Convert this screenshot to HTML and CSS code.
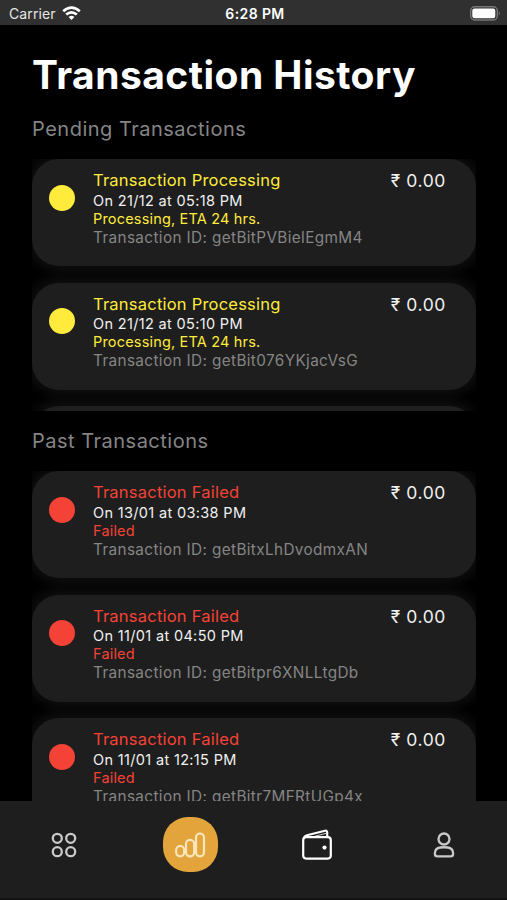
FILE: index.html
```html
<!DOCTYPE html>
<html lang="en">
<head>
<meta charset="utf-8">
<meta name="viewport" content="width=device-width">
<title>Transaction History</title>
<link rel="stylesheet" href="styles.css">
</head>
<body>
<header class="status">
  <div class="carrier"><span>Carrier</span>
    <svg width="19" height="15" viewBox="0 0 19 15" fill="none" stroke="#fff" stroke-width="2.700"><path d="M1.200 5.300Q9.500-2.200 17.800 5.300M4.200 8.600q5.300-4.600 10.600 0"/><path d="M6.600 11q2.900-2.300 5.800 0l-2.900 3z" fill="#fff" stroke="none"/></svg>
  </div>
  <div class="time">6:28 PM</div>
  <svg class="battery" width="31" height="15" viewBox="0 0 31 15"><rect x=".7" y=".7" width="26.600" height="13.300" rx="4" fill="none" stroke="#777" stroke-width="1.400"/><rect x="2.300" y="2.500" width="23" height="9.700" rx="2.200" fill="#fff"/><path d="M28.800 5.200q2 2.100 0 4.200z" fill="#777"/></svg>
</header>
<main>
  <h1>Transaction History</h1>
  <h2>Pending Transactions</h2>
  <section class="list pending">
    <article class="card"><i class="dot"></i><div class="info"><h3>Transaction Processing</h3><p class="date">On 21/12 at 05:18 PM</p><p class="state">Processing, ETA 24 hrs.</p><p class="id">Transaction ID: getBitPVBielEgmM4</p></div><div class="amount">₹ 0.00</div></article>
    <article class="card"><i class="dot"></i><div class="info"><h3>Transaction Processing</h3><p class="date">On 21/12 at 05:10 PM</p><p class="state">Processing, ETA 24 hrs.</p><p class="id">Transaction ID: getBit076YKjacVsG</p></div><div class="amount">₹ 0.00</div></article>
    <article class="card"></article>
  </section>
  <h2>Past Transactions</h2>
  <section class="list past">
    <article class="card"><i class="dot"></i><div class="info"><h3>Transaction Failed</h3><p class="date">On 13/01 at 03:38 PM</p><p class="state">Failed</p><p class="id">Transaction ID: getBitxLhDvodmxAN</p></div><div class="amount">₹ 0.00</div></article>
    <article class="card"><i class="dot"></i><div class="info"><h3>Transaction Failed</h3><p class="date">On 11/01 at 04:50 PM</p><p class="state">Failed</p><p class="id">Transaction ID: getBitpr6XNLLtgDb</p></div><div class="amount">₹ 0.00</div></article>
    <article class="card"><i class="dot"></i><div class="info"><h3>Transaction Failed</h3><p class="date">On 11/01 at 12:15 PM</p><p class="state">Failed</p><p class="id">Transaction ID: getBitr7MFRtUGp4x</p></div><div class="amount">₹ 0.00</div></article>
  </section>
</main>
<nav>
  <a class="tab"><svg class="grid-icon" width="26" height="26" viewBox="0 0 26 26" fill="none" stroke="#c9c9c9" stroke-width="2.300"><circle cx="6.300" cy="6.300" r="4.500"/><circle cx="19.700" cy="6.300" r="4.500"/><circle cx="6.300" cy="19.700" r="4.500"/><circle cx="19.700" cy="19.700" r="4.500"/></svg></a>
  <a class="tab"><span class="active"><svg width="32" height="28" viewBox="0 0 32 28" fill="none" stroke="#f8e6bd" stroke-width="2.200"><rect x="2.200" y="15" width="8" height="10.300" rx="4"/><rect x="12" y="8.800" width="8.200" height="16.500" rx="4.100"/><rect x="22" y="2.500" width="8" height="22.800" rx="4"/></svg></span></a>
  <a class="tab"><svg width="32" height="32" viewBox="0 0 32 32" fill="none" stroke="#fff" stroke-width="2.200" stroke-linejoin="round"><rect x="2.200" y="8.200" width="27.600" height="21.400" rx="3"/><path d="M3 8.600Q3.500 7.100 6 6.300L24 1.800q2.200-.5 2.200 1.800v4"/><path d="M14 7.200L25 4.400" stroke-width=".8"/><circle cx="23.500" cy="18.600" r="2.100" fill="#fff" stroke="none"/></svg></a>
  <a class="tab"><svg width="24" height="28" viewBox="0 0 24 28" fill="none" stroke="#c9c9c9" stroke-width="2.300"><circle cx="12" cy="8" r="5.500"/><path d="M5.600 25.400h12.800q2.700 0 2.700-2.700v-.5q0-5-5.300-5.700-3.800-.5-7.600 0-5.300.7-5.300 5.700v.5q0 2.700 2.700 2.700z"/></svg></a>
</nav>
</body>
</html>
```
FILE: styles.css
```css
* { box-sizing: border-box; margin: 0; padding: 0; }
body { width: 507px; height: 900px; overflow: hidden; display: flex; flex-direction: column; background: #000; color: #fff; font-family: Inter, "Noto Sans", sans-serif; white-space: nowrap; }
.status { height: 25px; flex: none; background: #303030; display: grid; grid-template-columns: 1fr auto 1fr; align-items: center; padding: 2px 6px 0 9px; font-size: 14px; color: #e6e6e6; }
.carrier { display: flex; align-items: center; gap: 6px; letter-spacing: .1px; }
.time { font-weight: 600; font-size: 14px; letter-spacing: .4px; color: #fff; }
.battery { justify-self: end; }
main { flex: 1; min-height: 0; padding: 0 31px 0 32px; display: flex; flex-direction: column; }
h1 { height: 90px; line-height: 100px; font-size: 39px; font-weight: 700; letter-spacing: .46px; }
h2 { height: 44px; line-height: 29px; font-size: 20px; font-weight: 400; letter-spacing: .5px; color: #858585; }
.list { overflow: hidden; display: flex; flex-direction: column; gap: 16.500px; }
.pending { height: 252px; flex: none; margin-bottom: 16px; color: #ffeb3b; }
.past { flex: 1; min-height: 0; color: #f44336; }
.card { flex: none; height: 107.200px; border-radius: 27px; background: #1e1e1e; box-shadow: 0 0 14px 4px #121212; display: grid; grid-template-columns: 44px 1fr auto; padding: 11px 30px 0 17px; }
.dot { width: 26px; height: 26px; border-radius: 50%; background: currentColor; margin-top: 14.600px; }
h3 { font-size: 16.500px; line-height: 21.700px; font-weight: 400; letter-spacing: .22px; }
.date { font-size: 14.500px; line-height: 18px; letter-spacing: .34px; color: #f1f1f1; }
.state { font-size: 14.500px; line-height: 18px; letter-spacing: .18px; }
.id { font-size: 15.300px; line-height: 20.600px; color: #858585; letter-spacing: .38px; }
.amount { font-size: 17.500px; line-height: 22px; letter-spacing: .6px; color: #f1f1f1; }
nav { height: 99px; flex: none; background: #1e1e1e; border-bottom: 2px solid #121212; display: grid; grid-template-columns: repeat(4, 1fr); }
.tab { height: 87px; display: flex; align-items: center; justify-content: center; }
.grid-icon { margin-left: 2px; }
.active { width: 55px; height: 55px; border-radius: 25px; background: #e3a53b; display: flex; align-items: center; justify-content: center; }
```
